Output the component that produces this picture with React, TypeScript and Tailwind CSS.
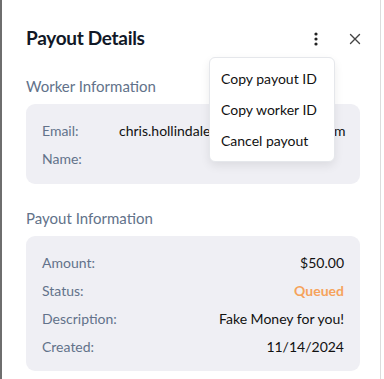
import React from 'react'

const workerRows = [
  { label: 'Email:', value: 'chris.hollindale@paymentsdemo.com' },
  { label: 'Name:', value: '' },
]

const payoutRows = [
  { label: 'Amount:', value: '$50.00', cls: 'text-[#111]' },
  { label: 'Status:', value: 'Queued', cls: 'text-[#f6a35c] font-bold' },
  { label: 'Description:', value: 'Fake Money for you!', cls: 'text-[#111]' },
  { label: 'Created:', value: '11/14/2024', cls: 'text-[#111]' },
]

export default function App() {
  return (
    <div className="relative w-[384px] h-[379px] overflow-hidden bg-white font-['Lato',sans-serif]">
      <div className="h-full w-[381px] border-l-2 border-[#6e6e6e] border-r border-r-[#dcdcdc] pl-[24px] pr-[20px]">
        {/* header */}
        <div className="flex items-center h-[76px] pt-[1px]">
          <h2 className="text-[19px] font-bold text-[#111827] tracking-[-0.3px]">Payout Details</h2>
          <div className="ml-auto flex items-center gap-[31px]">
            <svg width="4" height="14" viewBox="0 0 4 14" className="text-[#222]">
              <circle cx="2" cy="2" r="1.6" fill="currentColor" />
              <circle cx="2" cy="7" r="1.6" fill="currentColor" />
              <circle cx="2" cy="12" r="1.6" fill="currentColor" />
            </svg>
            <svg width="12" height="12" viewBox="0 0 12 12" className="text-[#444] mr-[-1px]">
              <path d="M1.5 1.5 L10.5 10.5 M10.5 1.5 L1.5 10.5" stroke="currentColor" strokeWidth="1.4" strokeLinecap="round" />
            </svg>
          </div>
        </div>

        <div className="text-[15px] text-[#62728a] h-[20px] leading-[20px]">Worker Information</div>
        <div className="mt-[8px] rounded-[9px] bg-[#efeff4] px-[16px] py-[16px] flex flex-col gap-[8px] w-[334px]">
          {workerRows.map(r => (
            <div key={r.label} className="flex h-[20px] items-center text-[14px] whitespace-nowrap">
              <span className="w-[77px] shrink-0 text-[#62728a]">{r.label}</span>
              <span className="text-[#111]">{r.value}</span>
            </div>
          ))}
        </div>

        <div className="mt-[24px] text-[15px] text-[#62728a] h-[20px] leading-[20px]">Payout Information</div>
        <div className="mt-[8px] rounded-[9px] bg-[#efeff4] px-[16px] pt-[16px] pb-[15px] flex flex-col gap-[8px] w-[334px]">
          {payoutRows.map(r => (
            <div key={r.label} className="flex h-[20px] items-center justify-between text-[14px]">
              <span className="text-[#62728a]">{r.label}</span>
              <span className={r.cls}>{r.value}</span>
            </div>
          ))}
        </div>
      </div>

      {/* dropdown menu */}
      <div className="absolute left-[209px] top-[57px] w-[126px] rounded-[6px] border border-[#e5e7eb] bg-white shadow-[0_4px_10px_rgba(0,0,0,0.08)] py-[5px]">
        {['Copy payout ID', 'Copy worker ID', 'Cancel payout'].map(t => (
          <div key={t} className="h-[31px] flex items-center px-[11px] text-[14px] text-[#111]">{t}</div>
        ))}
      </div>
    </div>
  )
}
